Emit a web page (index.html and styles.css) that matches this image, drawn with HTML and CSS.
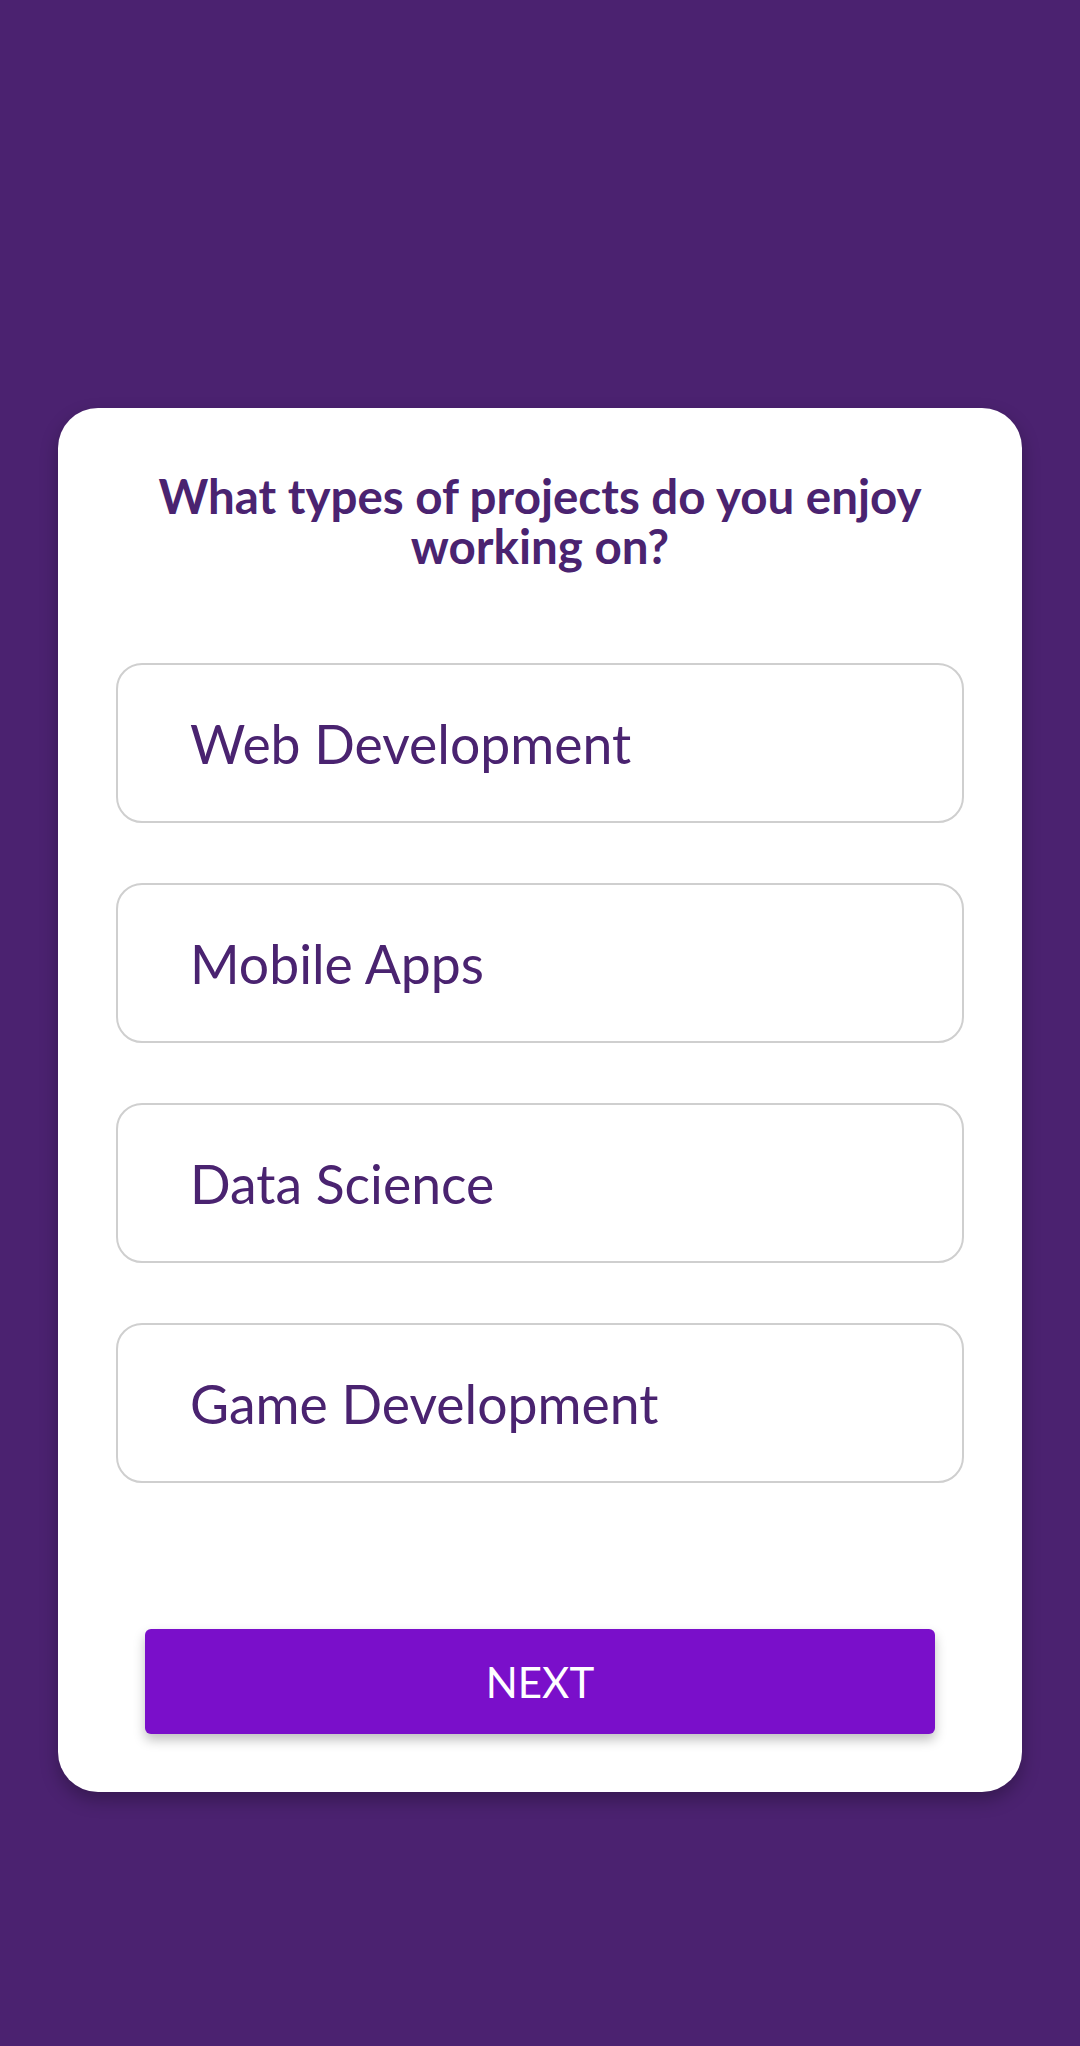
FILE: index.html
```html
<!DOCTYPE html>
<html lang="en">
<head>
<meta charset="utf-8">
<title>Quiz</title>
<link rel="stylesheet" href="styles.css">
</head>
<body>
<main class="screen">
  <section class="card">
    <h1 class="question">What types of projects do you enjoy working on?</h1>
    <div class="options">
      <div class="option">Web Development</div>
      <div class="option">Mobile Apps</div>
      <div class="option">Data Science</div>
      <div class="option">Game Development</div>
    </div>
    <button class="next">NEXT</button>
  </section>
</main>
</body>
</html>
```

FILE: styles.css
```css
* { box-sizing: border-box; }
html, body {
  margin: 0;
  padding: 0;
  background: #4b2270;
}
body {
  width: 1080px;
  height: 2046px;
  overflow: hidden;
  font-family: "Lato", "Noto Sans", sans-serif;
}
.screen {
  padding: 408px 58px 0 58px;
}
.card {
  width: 964px;
  height: 1384px;
  background: #ffffff;
  border-radius: 40px;
  box-shadow: 0 8px 18px rgba(0, 0, 0, 0.28);
  padding: 63px 40px 58px 40px;
  display: flex;
  flex-direction: column;
}
.question {
  margin: 0;
  text-align: center;
  font-size: 47.5px;
  line-height: 50px;
  font-weight: 700;
  color: #4a2370;
}
.options {
  margin: 92px 18px 0 18px;
  display: flex;
  flex-direction: column;
  gap: 60px;
}
.option {
  height: 160px;
  border: 2px solid #cfcfcf;
  border-radius: 26px;
  display: flex;
  align-items: center;
  padding-left: 72px;
  font-size: 53.5px;
  color: #4a2370;
}
.next {
  margin: auto 47px 0 47px;
  height: 105px;
  border: none;
  border-radius: 6px;
  background: #7a0fca;
  color: #ffffff;
  font-family: "Lato", "Noto Sans", sans-serif;
  font-size: 42px;
  box-shadow: 0 6px 12px rgba(0, 0, 0, 0.25);
}
```
